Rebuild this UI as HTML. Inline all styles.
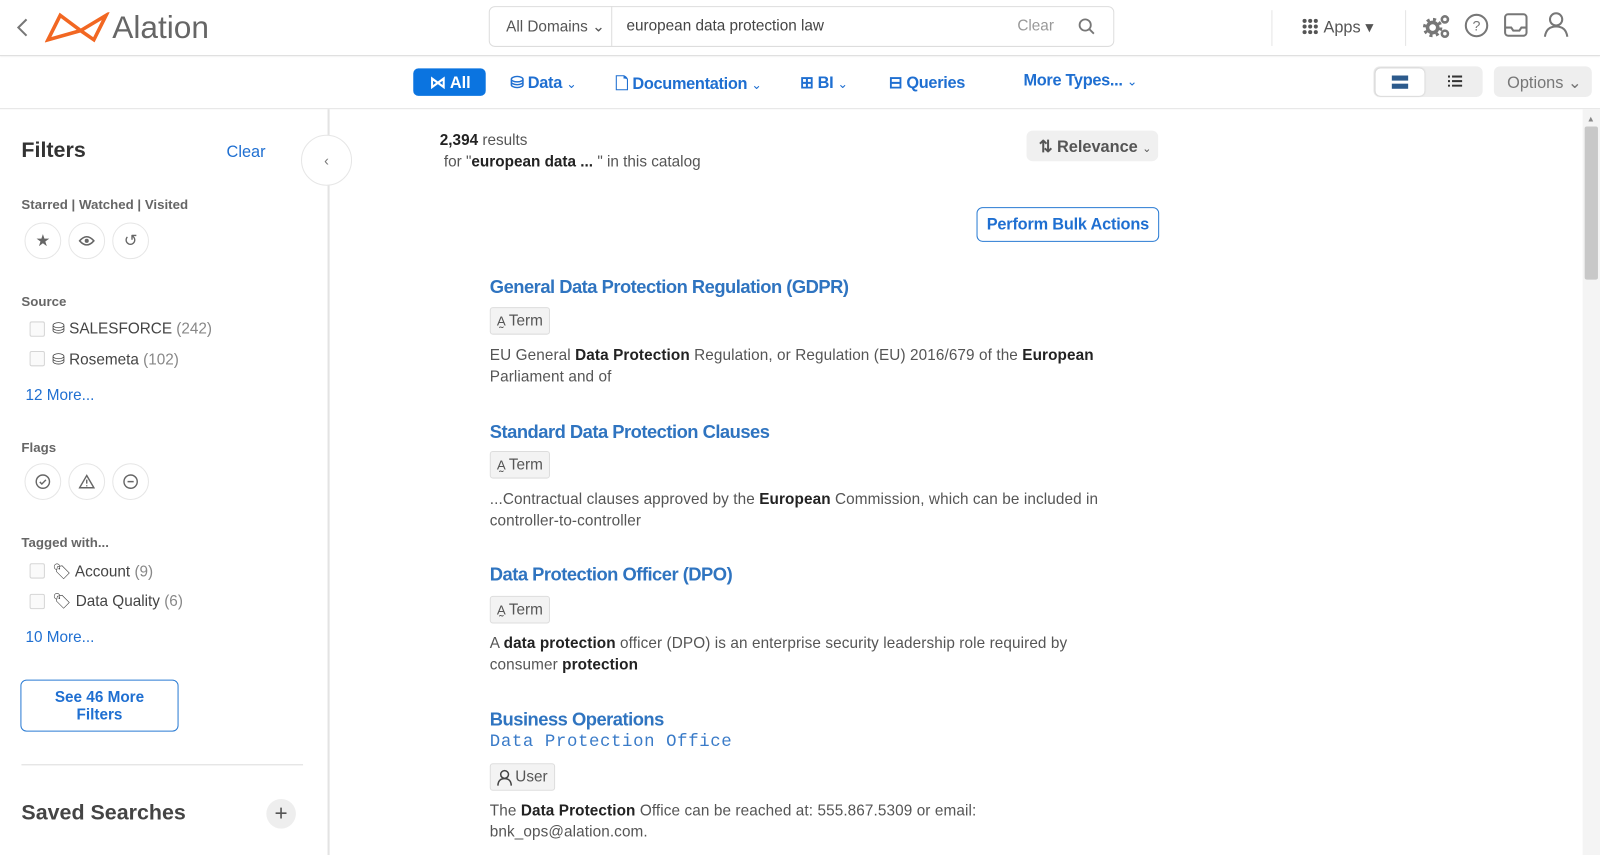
<!DOCTYPE html>
<html><head><meta charset="utf-8"><style>
*{box-sizing:border-box;margin:0;padding:0}
html,body{width:1600px;height:855px;overflow:hidden;background:#fff}
body{font-family:"Liberation Sans",sans-serif;color:#444;position:relative}
#w{position:absolute;left:0;top:0;width:1568px;height:838px;transform:scale(1.0204);transform-origin:0 0}
.a{position:absolute;white-space:nowrap}
.blue{color:#1f6fd1}
.hdr{position:absolute;left:0;top:0;width:1568px;height:55px;border-bottom:1px solid #ddd;box-shadow:0 1px 2px rgba(0,0,0,.06)}
.nav{position:absolute;left:0;top:55px;width:1568px;height:52px;border-bottom:1px solid #e3e3e3}
.circ{position:absolute;width:36px;height:36px;border:1px solid #e6e6e6;border-radius:50%;display:flex;align-items:center;justify-content:center}
.cb{position:absolute;width:15px;height:15px;border:1px solid #d5d5d5;border-radius:2px;background:#fafafa}
.lbl{font-size:13px;font-weight:bold;color:#666}
.ttl{font-size:18px;font-weight:bold;color:#2f74c0;letter-spacing:-0.5px}
.badge{position:absolute;height:27px;border:1px solid #ddd;background:#f3f3f3;border-radius:3px;font-size:15px;color:#555;padding:0 6px;display:flex;align-items:center;gap:3px}
.desc{font-size:15px;color:#555;line-height:21px;letter-spacing:0.1px}
.desc b{color:#222}
.navi{font-size:16px;font-weight:bold;color:#1f6fd1;letter-spacing:-0.3px}
</style></head><body><div id="w">
<div class="hdr"></div>
<svg class="a" style="left:14px;top:16px" width="16" height="22"><path d="M12 3L4 11l8 8" stroke="#777" stroke-width="2" fill="none"/></svg>
<svg class="a" style="left:44px;top:12px" width="66" height="30"><path d="M3 27L15 3 L35 18 L60 3 L48 27 L35 18 Z" stroke="#f26722" stroke-width="3.5" fill="none"/></svg>
<div class="a" style="left:110px;top:9px;font-size:31px;color:#666">Alation</div>
<div class="a" style="left:479px;top:6px;width:613px;height:40px;border:1px solid #ddd;border-radius:6px"></div>
<div class="a" style="left:599px;top:6px;width:1px;height:40px;background:#ddd"></div>
<div class="a" style="left:496px;top:17px;font-size:15px;color:#555">All Domains ⌄</div>
<div class="a" style="left:614px;top:17px;font-size:15px;color:#444">european data protection law</div>
<div class="a" style="left:997px;top:17px;font-size:15px;color:#999">Clear</div>
<svg class="a" style="left:1056px;top:17px" width="18" height="18"><circle cx="7.5" cy="7.5" r="5.5" stroke="#777" stroke-width="1.8" fill="none"/><path d="M11.5 11.5L16 16" stroke="#777" stroke-width="1.8"/></svg>
<div class="a" style="left:1246px;top:10px;width:1px;height:35px;background:#e5e5e5"></div>
<div class="a" style="left:1377px;top:10px;width:1px;height:35px;background:#e5e5e5"></div>
<svg class="a" style="left:1276px;top:18px" width="16" height="16" fill="#555"><circle cx="2.5" cy="2.5" r="2"/><circle cx="8" cy="2.5" r="2"/><circle cx="13.5" cy="2.5" r="2"/><circle cx="2.5" cy="8" r="2"/><circle cx="8" cy="8" r="2"/><circle cx="13.5" cy="8" r="2"/><circle cx="2.5" cy="13.5" r="2"/><circle cx="8" cy="13.5" r="2"/><circle cx="13.5" cy="13.5" r="2"/></svg>
<div class="a" style="left:1297px;top:17px;font-size:16px;color:#555">Apps ▾</div>
<svg class="a" style="left:1394px;top:13px" width="28" height="26"><circle cx="10" cy="14" r="5" stroke="#777" stroke-width="3.5" fill="none"/><circle cx="10" cy="14" r="8" stroke="#777" stroke-width="3" fill="none" stroke-dasharray="3 3.3"/><circle cx="22" cy="6" r="3" stroke="#777" stroke-width="2.5" fill="none"/><circle cx="22" cy="20" r="3" stroke="#777" stroke-width="2.5" fill="none"/></svg>
<svg class="a" style="left:1434px;top:12px" width="26" height="26"><circle cx="13" cy="13" r="10.5" stroke="#777" stroke-width="2" fill="none"/><text x="13" y="18" font-size="14" text-anchor="middle" fill="#777" font-family="Liberation Sans">?</text></svg>
<svg class="a" style="left:1473px;top:12px" width="26" height="26"><rect x="2" y="2" width="21" height="21" rx="3" stroke="#777" stroke-width="2" fill="none"/><path d="M2 15h6l2 3h6l2-3h5" stroke="#777" stroke-width="2" fill="none"/></svg>
<svg class="a" style="left:1512px;top:11px" width="26" height="26"><circle cx="13" cy="8" r="6" stroke="#777" stroke-width="2" fill="none"/><path d="M2 25c1-7 5-10 11-10s10 3 11 10" stroke="#777" stroke-width="2" fill="none"/></svg>

<div class="nav"></div>
<div class="a" style="left:405px;top:67px;width:71px;height:27px;background:#0b74e0;border-radius:5px;color:#fff;font-weight:bold;font-size:16px;padding:4px 0 0 16px">⋈ All</div>
<div class="a navi" style="left:500px;top:71px">⛁ Data <span style="font-weight:normal;font-size:12px">⌄</span></div>
<div class="a navi" style="left:603px;top:71px">🗋 Documentation <span style="font-weight:normal;font-size:12px">⌄</span></div>
<div class="a navi" style="left:784px;top:71px">⊞ BI <span style="font-weight:normal;font-size:12px">⌄</span></div>
<div class="a navi" style="left:871px;top:71px">⊟ Queries</div>
<div class="a navi" style="left:1003px;top:71px">More Types... <span style="font-weight:normal;font-size:12px">⌄</span></div>
<div class="a" style="left:1346px;top:65px;width:107px;height:30px;background:#eee;border-radius:6px"></div>
<div class="a" style="left:1348px;top:67px;width:48px;height:27px;background:#fff;border-radius:5px;box-shadow:0 0 2px rgba(0,0,0,.2)"></div>
<div class="a" style="left:1364px;top:74px;width:16px;height:5px;background:#2c5a8c"></div>
<div class="a" style="left:1364px;top:82px;width:16px;height:5px;background:#2c5a8c"></div>
<svg class="a" style="left:1419px;top:74px" width="14" height="11" fill="#333"><rect x="0" y="0" width="2" height="2"/><rect x="4" y="0" width="10" height="2"/><rect x="0" y="4.5" width="2" height="2"/><rect x="4" y="4.5" width="10" height="2"/><rect x="0" y="9" width="2" height="2"/><rect x="4" y="9" width="10" height="2"/></svg>
<div class="a" style="left:1464px;top:65px;width:96px;height:30px;background:#eee;border-radius:6px;font-size:16px;color:#777;padding:6px 0 0 13px">Options ⌄</div>

<div class="a" style="left:321px;top:107px;width:2px;height:740px;background:#e3e3e3"></div>
<div class="circ" style="left:295px;top:132px;width:50px;height:50px;background:#fff;font-size:14px;color:#777">‹</div>
<div class="a" style="left:21px;top:136px;font-size:21px;font-weight:bold;color:#333">Filters</div>
<div class="a blue" style="left:222px;top:141px;font-size:16px">Clear</div>
<div class="a lbl" style="left:21px;top:193px">Starred | Watched | Visited</div>
<div class="circ" style="left:24px;top:218px;color:#666;font-size:16px">★</div>
<div class="circ" style="left:67px;top:218px"><svg width="16" height="12"><path d="M1 6Q8 -2 15 6Q8 14 1 6Z" stroke="#666" stroke-width="1.5" fill="none"/><circle cx="8" cy="6" r="2" fill="#666"/></svg></div>
<div class="circ" style="left:110px;top:218px;color:#666;font-size:16px">↺</div>
<div class="a lbl" style="left:21px;top:288px">Source</div>
<div class="cb" style="left:29px;top:315px"></div>
<div class="a" style="left:51px;top:313px;font-size:15px;color:#444">⛁ SALESFORCE <span style="color:#888">(242)</span></div>
<div class="cb" style="left:29px;top:344px"></div>
<div class="a" style="left:51px;top:343px;font-size:15px;color:#444">⛁ Rosemeta <span style="color:#888">(102)</span></div>
<div class="a blue" style="left:25px;top:379px;font-size:15px">12 More...</div>
<div class="a lbl" style="left:21px;top:431px">Flags</div>
<div class="circ" style="left:24px;top:454px"><svg width="16" height="16"><circle cx="8" cy="8" r="6.5" stroke="#666" stroke-width="1.4" fill="none"/><path d="M5 8.3l2 2 4-4" stroke="#666" stroke-width="1.4" fill="none"/></svg></div>
<div class="circ" style="left:67px;top:454px"><svg width="16" height="16"><path d="M8 2L15 14H1Z" stroke="#666" stroke-width="1.4" fill="none"/><path d="M8 6v4M8 11.5v1.2" stroke="#666" stroke-width="1.4"/></svg></div>
<div class="circ" style="left:110px;top:454px"><svg width="16" height="16"><circle cx="8" cy="8" r="6.5" stroke="#666" stroke-width="1.4" fill="none"/><path d="M5 8h6" stroke="#666" stroke-width="1.4"/></svg></div>
<div class="a lbl" style="left:21px;top:524px">Tagged with...</div>
<div class="cb" style="left:29px;top:552px"></div>
<div class="a" style="left:51px;top:551px;font-size:15px;color:#444">🏷 Account <span style="color:#888">(9)</span></div>
<div class="cb" style="left:29px;top:582px"></div>
<div class="a" style="left:51px;top:580px;font-size:15px;color:#444">🏷 Data Quality <span style="color:#888">(6)</span></div>
<div class="a blue" style="left:25px;top:616px;font-size:15px">10 More...</div>
<div class="a" style="left:20px;top:666px;width:155px;height:51px;border:1px solid #2a7bd3;border-radius:6px;color:#1f6fd1;font-weight:bold;font-size:15px;text-align:center;padding-top:8px;line-height:17px">See 46 More<br>Filters</div>
<div class="a" style="left:21px;top:749px;width:276px;height:1px;background:#ddd"></div>
<div class="a" style="left:21px;top:785px;font-size:21px;font-weight:bold;color:#444">Saved Searches</div>
<div class="a" style="left:261px;top:783px;width:29px;height:29px;border-radius:50%;background:#eee;text-align:center;font-size:22px;color:#555;line-height:28px">+</div>

<div class="a" style="left:431px;top:129px;font-size:15px;color:#555"><b style="color:#222">2,394</b> results</div>
<div class="a" style="left:435px;top:150px;font-size:15px;color:#555">for "<b style="color:#222">european data ... </b>" in this catalog</div>
<div class="a" style="left:1006px;top:128px;width:129px;height:30px;background:#f0f0f0;border-radius:6px;font-size:16px;font-weight:bold;color:#555;padding:6px 0 0 12px">⇅ Relevance <span style="font-weight:normal;font-size:11px">⌄</span></div>
<div class="a" style="left:957px;top:203px;width:179px;height:34px;border:1px solid #2a7bd3;border-radius:6px;font-size:16px;font-weight:bold;color:#1f6fd1;text-align:center;padding-top:8px;letter-spacing:-0.2px">Perform Bulk Actions</div>

<div class="a ttl" style="left:480px;top:271px">General Data Protection Regulation (GDPR)</div>
<div class="badge" style="left:480px;top:301px"><i style="font-style:normal;font-size:13px">A̰</i> Term</div>
<div class="a desc" style="left:480px;top:338px">EU General <b>Data Protection</b> Regulation, or Regulation (EU) 2016/679 of the <b>European</b><br>Parliament and of</div>

<div class="a ttl" style="left:480px;top:413px">Standard Data Protection Clauses</div>
<div class="badge" style="left:480px;top:442px"><i style="font-style:normal;font-size:13px">A̰</i> Term</div>
<div class="a desc" style="left:480px;top:479px">...Contractual clauses approved by the <b>European</b> Commission, which can be included in<br>controller-to-controller</div>

<div class="a ttl" style="left:480px;top:553px">Data Protection Officer (DPO)</div>
<div class="badge" style="left:480px;top:584px"><i style="font-style:normal;font-size:13px">A̰</i> Term</div>
<div class="a desc" style="left:480px;top:620px">A <b>data protection</b> officer (DPO) is an enterprise security leadership role required by<br>consumer <b>protection</b></div>

<div class="a ttl" style="left:480px;top:695px">Business Operations</div>
<div class="a" style="left:480px;top:718px;font-family:'Liberation Mono',monospace;font-size:17px;color:#3a7bc8;letter-spacing:0.6px">Data Protection Office</div>
<div class="badge" style="left:480px;top:748px"><svg width="15" height="16"><circle cx="7.5" cy="5" r="3.8" stroke="#444" stroke-width="1.5" fill="none"/><path d="M1 16c0-5 3-7 6.5-7s6.5 2 6.5 7" stroke="#444" stroke-width="1.5" fill="none"/></svg>User</div>
<div class="a desc" style="left:480px;top:784px">The <b>Data Protection</b> Office can be reached at: 555.867.5309 or email:<br>bnk_ops@alation.com.</div>

<div class="a" style="left:1551px;top:107px;width:17px;height:740px;background:#f4f4f4"></div>
<div class="a" style="left:1553px;top:124px;width:13px;height:150px;background:#c8c8c8;border-radius:2px"></div>
<div class="a" style="left:1555px;top:112px;font-size:8px;color:#888">▲</div>
</div></body></html>
